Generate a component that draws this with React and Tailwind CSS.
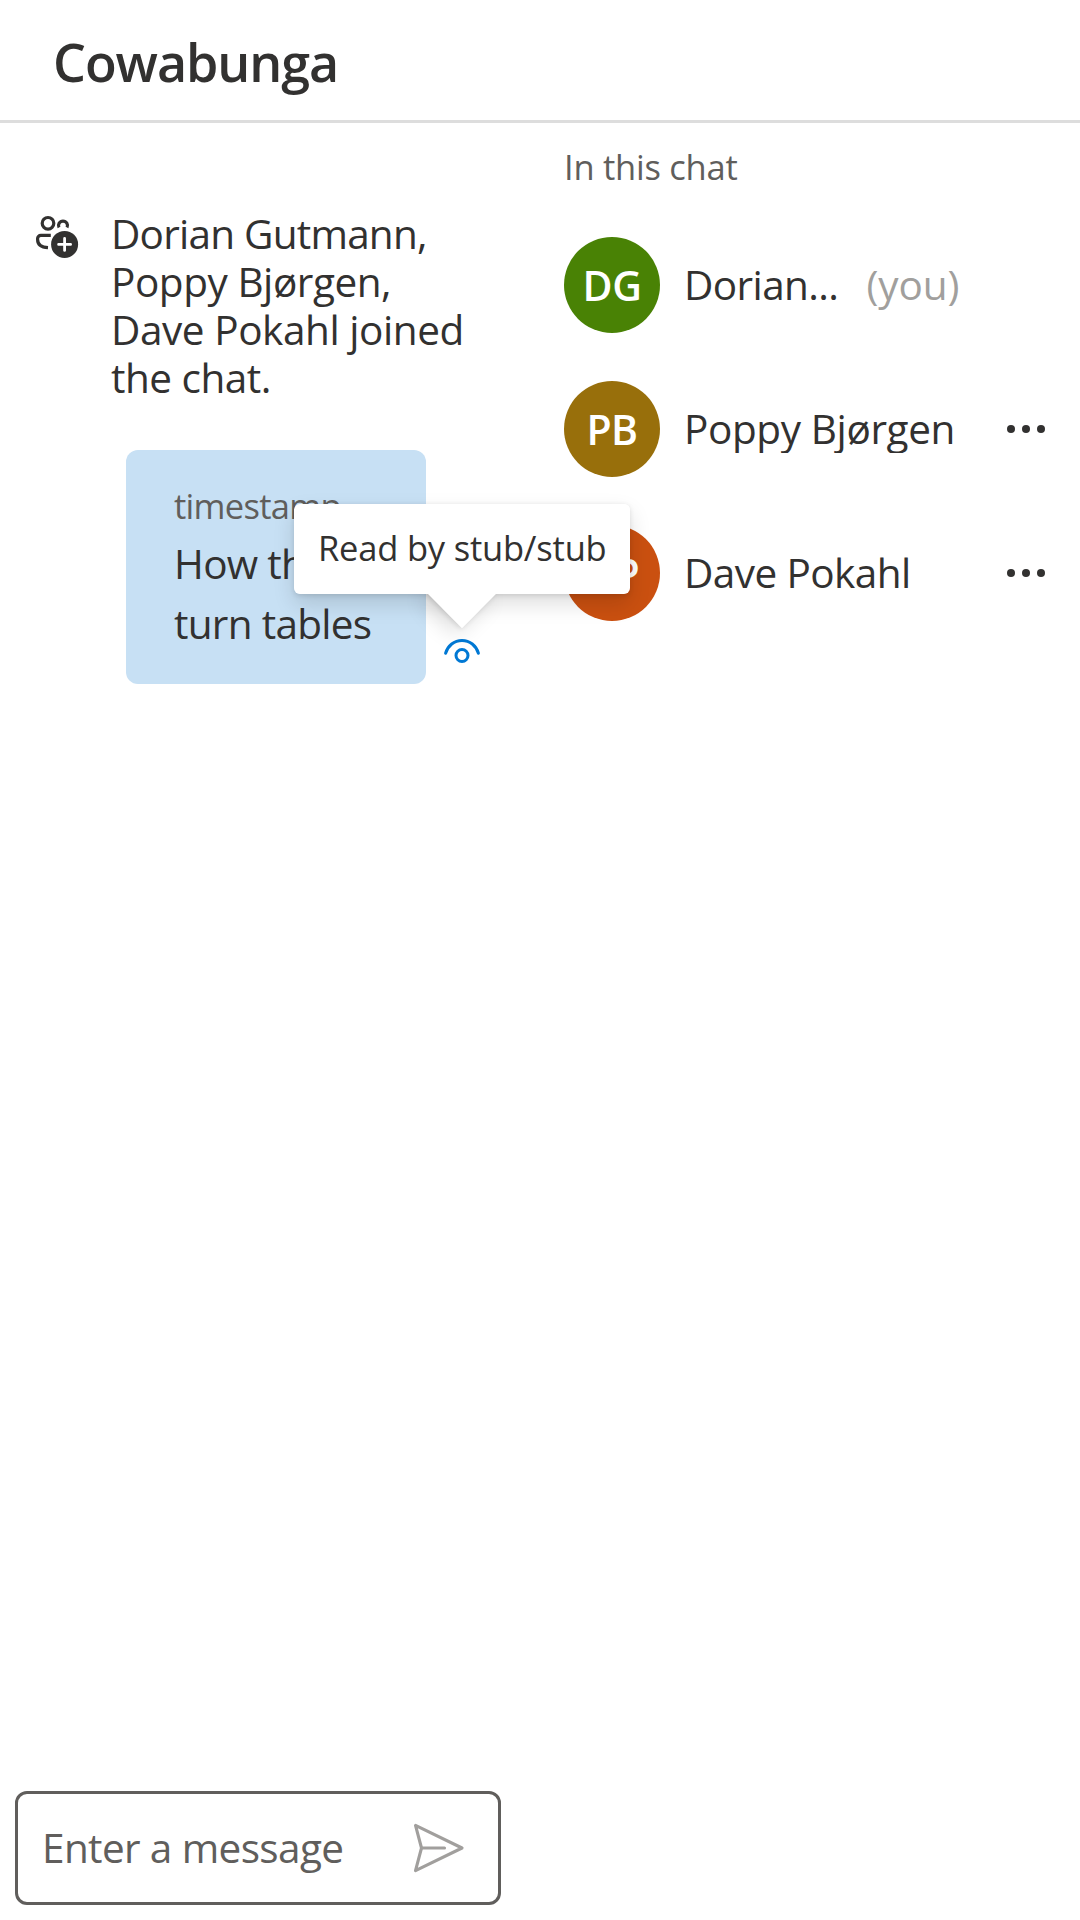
import React from "react";

function PeopleAddIcon() {
  return (
    <svg className="block h-[48px] w-[48px]" viewBox="0 0 48 48" fill="none" stroke="#323130" strokeWidth="3.2" strokeLinecap="round" strokeLinejoin="round">
      <circle cx="15" cy="13.3" r="5.8" />
      <path d="M26 17.600a4.500 4.500 0 1 1 8 0" strokeLinecap="butt" />
      <path d="M17.800 25.400H7.800a3.200 3.200 0 0 0-3.200 3.200v.8c0 5 3.600 7.800 10.400 8.200" strokeLinecap="butt" />
      <circle cx="31.600" cy="34.400" r="13.500" fill="#323130" stroke="none" />
      <path d="M31.600 28.400v12M25.600 34.400h12" stroke="#fff" strokeWidth="2.800" />
    </svg>
  );
}

function EyeIcon() {
  return (
    <svg className="block h-[30px] w-[42px]" viewBox="0 0 42 30" fill="none" stroke="#0078d4" strokeWidth="3" strokeLinecap="round">
      <path d="M4.6 17.2C6.8 9.800 13.2 4.400 21 4.400S35.200 9.800 37.400 17.200" />
      <circle cx="21" cy="19.500" r="6" />
    </svg>
  );
}

function SendIcon() {
  return (
    <svg className="block h-[60px] w-[60px]" viewBox="0 0 60 60" fill="none" stroke="#a19f9d" strokeWidth="3.100" strokeLinecap="round" strokeLinejoin="round">
      <path d="M6.500 7.400 53 30 6.500 52.600 12.500 30Z" />
      <path d="M12.500 30H35.500" />
    </svg>
  );
}

function MoreIcon() {
  return (
    <svg className="block h-[12px] w-[42px]" viewBox="0 0 42 12" fill="#323130">
      <circle cx="6" cy="6" r="4" />
      <circle cx="21" cy="6" r="4" />
      <circle cx="36" cy="6" r="4" />
    </svg>
  );
}

function Participant({ initials, color, you, more, children }) {
  return (
    <li className="flex h-[96px] items-center">
      <div className={`flex h-[96px] w-[96px] shrink-0 items-center justify-center rounded-full ${color}`}>
        <span className="text-[41px] leading-[60px] font-semibold tracking-[-0.5px] text-white">{initials}</span>
      </div>
      <div className="ml-[24px] h-[48px] overflow-hidden whitespace-nowrap text-[40.5px] leading-[48px]">{children}</div>
      {you && <span className="ml-[28px] text-[40.5px] leading-[48px] tracking-[-0.1px] text-[#a19f9d]">(you)</span>}
      {more && (
        <button className="mr-[33px] ml-auto" aria-label="More options">
          <MoreIcon />
        </button>
      )}
    </li>
  );
}

export default function App() {
  return (
    <div className="flex h-[1920px] w-[1080px] flex-col overflow-hidden bg-white font-['Open_Sans','Noto_Sans',sans-serif] text-[#323130]">
      <header className="flex h-[123px] shrink-0 items-center border-b-[3px] border-[#dddddd] pl-[53px]">
        <h1 className="pt-[3px] text-[52px] leading-[72px] font-semibold tracking-[-1.07px]">Cowabunga</h1>
      </header>

      <div className="flex min-h-0 flex-1">
        <main className="flex w-[516px] flex-col">
          <div className="mt-[87px] flex">
            <div className="ml-[33px] w-[78px] shrink-0">
              <PeopleAddIcon />
            </div>
            <p className="whitespace-nowrap text-[40.5px] leading-[48px]">
              <span className="block tracking-[-0.77px]">Dorian Gutmann,</span>
              <span className="block tracking-[-0.45px]">Poppy Bjørgen,</span>
              <span className="block tracking-[-0.43px]">Dave Pokahl joined</span>
              <span className="block tracking-[-0.5px]">the chat.</span>
            </p>
          </div>

          <div className="mt-[48px] ml-[126px] flex items-end">
            <div className="h-[234px] w-[300px] rounded-[12px] bg-[#c7e0f4] pt-[30px] pl-[48px]">
              <div className="mb-[3px] text-[34.5px] leading-[51px] tracking-[-0.7px] text-[#605e5c]">timestamp</div>
              <div className="text-[40.5px] leading-[60px] tracking-[-0.7px]">
                How the
                <br />
                turn tables
              </div>
            </div>
            <div className="relative mb-[18px] ml-[15px]">
              <EyeIcon />
              <div className="absolute bottom-[72px] left-1/2 z-10 -ml-[168px] h-[90px] w-[336px]">
                <div className="absolute bottom-[-24px] left-[144px] h-[48px] w-[48px] rotate-45 bg-white shadow-[0_9.6px_21.6px_rgba(0,0,0,0.132),0_1.8px_5.4px_rgba(0,0,0,0.108)]" />
                <div className="absolute inset-0 rounded-[6px] shadow-[0_9.6px_21.6px_rgba(0,0,0,0.132),0_1.8px_5.4px_rgba(0,0,0,0.108)]" />
                <div className="absolute bottom-[-24px] left-[144px] h-[48px] w-[48px] rotate-45 bg-white" />
                <div className="relative flex h-[90px] items-center rounded-[6px] bg-white pb-[2px] pl-[24px] text-[34.5px] leading-[48px] tracking-[-0.2px] whitespace-nowrap">
                  Read by stub/stub
                </div>
              </div>
            </div>
          </div>

          <div className="mt-auto mb-[15px] ml-[15px] flex h-[114px] w-[486px] items-center rounded-[12px] border-[3px] border-[#605e5c] pl-[24px]">
            <span className="text-[40.5px] leading-[60px] tracking-[-0.62px] whitespace-nowrap text-[#605e5c]">Enter a message</span>
            <button className="mr-[29px] ml-auto" aria-label="Send message">
              <SendIcon />
            </button>
          </div>
        </main>

        <aside className="flex-1 pl-[48px]">
          <h2 className="mt-[18px] text-[34.5px] leading-[51px] tracking-[-0.25px] text-[#605e5c]">In this chat</h2>
          <ul className="mt-[45px] flex flex-col gap-[48px]">
            <Participant initials="DG" color="bg-[#498205]" you>
              <span className="tracking-[-0.6px]">Dorian...</span>
            </Participant>
            <Participant initials="PB" color="bg-[#986f0b]" more>
              <span className="tracking-[-0.38px]">Poppy Bjørgen</span>
            </Participant>
            <Participant initials="DP" color="bg-[#ca5010]" more>
              <span className="tracking-[-0.58px]">Dave Pokahl</span>
            </Participant>
          </ul>
        </aside>
      </div>
    </div>
  );
}
